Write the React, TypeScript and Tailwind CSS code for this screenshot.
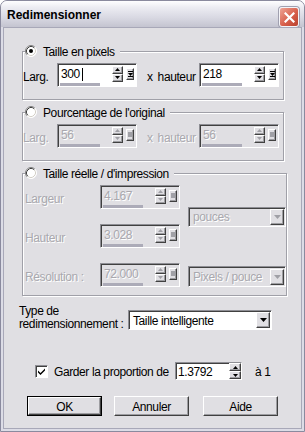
import type { ReactNode } from "react";

const UI_FONT = "font-['Liberation_Sans',Arial,sans-serif] tracking-[-0.4px]";
const FACE = "bg-[#e0dfe3]";
const RAISED =
  "border border-t-white border-l-white border-r-[#404040] border-b-[#404040] shadow-[inset_-1px_-1px_#9d9da1]";
const SUNKEN =
  "border border-t-[#8e8e94] border-l-[#8e8e94] border-r-white border-b-white shadow-[inset_1px_1px_#404040]";
const DIM = "text-[#a9a8ae] [text-shadow:1px_1px_0_#ffffff]";

function Tri({ up = false, color = "#000", w = 5, h = 3 }: { up?: boolean; color?: string; w?: number; h?: number }) {
  const pts = up ? `0,${h} ${w / 2},0 ${w},${h}` : `0,0 ${w},0 ${w / 2},${h}`;
  return (
    <svg width={w} height={h} viewBox={`0 0 ${w} ${h}`} className="block shrink-0">
      <polygon points={pts} fill={color} />
    </svg>
  );
}

function Radio({ checked = false }: { checked?: boolean }) {
  return (
    <svg width="12" height="12" viewBox="0 0 12 12" className="block shrink-0">
      <circle cx="6" cy="6" r="5.5" fill="#fff" />
      <path d="M2.11 9.89A5.5 5.5 0 0 1 9.89 2.11" fill="none" stroke="#808080" />
      <path d="M9.89 2.11A5.5 5.5 0 0 1 2.11 9.89" fill="none" stroke="#fff" />
      <path d="M2.82 9.18A4.5 4.5 0 0 1 9.18 2.82" fill="none" stroke="#404040" />
      <path d="M9.18 2.82A4.5 4.5 0 0 1 2.82 9.18" fill="none" stroke="#d4d0c8" />
      {checked ? <circle cx="6" cy="6" r="2" fill="#000" /> : null}
    </svg>
  );
}

function SpinArrows({ disabled = false, className = "" }: { disabled?: boolean; className?: string }) {
  const color = disabled ? "#a0a0a6" : "#000";
  return (
    <div className={`flex shrink-0 flex-col ${className}`}>
      <div className={`flex flex-1 items-center justify-center ${FACE} ${RAISED}`}>
        <Tri up color={color} />
      </div>
      <div className={`flex flex-1 items-center justify-center ${FACE} ${RAISED}`}>
        <Tri color={color} />
      </div>
    </div>
  );
}

function SliderButton({ disabled = false }: { disabled?: boolean }) {
  return (
    <div className={`ml-[3px] mr-[2px] flex h-[12px] w-[8px] shrink-0 items-center justify-center ${FACE} ${RAISED}`}>
      {disabled ? (
        <div className="h-[5px] w-[4px] bg-[#a0a0a6]" />
      ) : (
        <svg width="5" height="6" viewBox="0 0 5 6" className="block">
          <rect x="0" y="0" width="5" height="1" fill="#000" />
          <polygon points="0,2 5,2 2.5,5" fill="#000" />
          <rect x="0" y="5" width="5" height="1" fill="#000" />
        </svg>
      )}
    </div>
  );
}

function SpinInput({ value, disabled = false, caret = false }: { value: string; disabled?: boolean; caret?: boolean }) {
  return (
    <div className={`flex h-[24px] w-[80px] shrink-0 flex-col ${SUNKEN} ${disabled ? FACE : "bg-white"}`}>
      <div className="flex h-[19px] items-center">
        <span className={`ml-[3px] flex flex-1 items-center pt-[1px] ${disabled ? DIM : "text-black"}`}>
          {value}
          {caret ? <span className="ml-[2px] h-[13px] w-px bg-black" /> : null}
        </span>
        <SpinArrows disabled={disabled} className="h-[16px] w-[11px]" />
        <SliderButton disabled={disabled} />
      </div>
      <div className="ml-[2px] flex h-[3px]">
        <div className="w-[40px] bg-[#acabb8]" />
      </div>
    </div>
  );
}

function Dropdown({ value, disabled = false, className = "" }: { value: string; disabled?: boolean; className?: string }) {
  return (
    <div className={`flex items-center ${SUNKEN} ${disabled ? FACE : "bg-white"} ${className}`}>
      <span className={`flex-1 whitespace-nowrap pl-[4px] pt-[1px] ${disabled ? DIM : "text-black"}`}>{value}</span>
      <div className={`mr-[1px] flex h-[16px] w-[14px] items-center justify-center ${FACE} ${RAISED}`}>
        <Tri color={disabled ? "#a0a0a6" : "#000"} w={7} h={4} />
      </div>
    </div>
  );
}

function Group({ label, checked = false, children }: { label: string; checked?: boolean; children: ReactNode }) {
  return (
    <fieldset className="ml-[18px] mt-[5px] w-[262px] border border-[#a0a0a8] shadow-[inset_1px_1px_#fff,1px_1px_#fff]">
      <legend className={`ml-[2px] flex h-[14px] items-center gap-[6px] pr-[5px] ${FACE}`}>
        <Radio checked={checked} />
        <span className="whitespace-nowrap pt-[1px] text-black">{label}</span>
      </legend>
      {children}
    </fieldset>
  );
}

function PixelRow({ w, h, disabled = false, caret = false }: { w: string; h: string; disabled?: boolean; caret?: boolean }) {
  const text = disabled ? DIM : "text-black";
  return (
    <div className="mb-[12px] mt-[5px] flex items-start whitespace-nowrap">
      <span className={`mt-[8px] w-[34px] ${text}`}>Larg.</span>
      <SpinInput value={w} disabled={disabled} caret={caret} />
      <span className={`mt-[8px] flex w-[62px] pl-[10px] ${text}`}>
        x<span className="ml-[5px]">hauteur</span>
      </span>
      <SpinInput value={h} disabled={disabled} />
    </div>
  );
}

function Btn({ label, isDefault = false, className = "" }: { label: string; isDefault?: boolean; className?: string }) {
  if (isDefault) {
    return (
      <button className={`h-[20px] w-[75px] border border-black p-0 ${className}`}>
        <div className={`flex h-full w-full items-center justify-center pt-[1px] ${FACE} ${RAISED}`}>{label}</div>
      </button>
    );
  }
  return (
    <button className={`flex h-[20px] w-[75px] items-center justify-center pt-[1px] ${FACE} ${RAISED} ${className}`}>
      {label}
    </button>
  );
}

export default function App() {
  return (
    <div className="h-[432px] w-[305px] bg-white">
      <div className={`flex h-[432px] w-[305px] flex-col rounded-t-[7px] border border-[#8a8a9e] bg-[#dcdce6] ${UI_FONT}`}>
        <div className="flex h-[26px] shrink-0 justify-between rounded-t-[6px] bg-[linear-gradient(to_bottom,#fefeff_0%,#ececf2_25%,#d8d8e2_65%,#c4c4d0_100%)] pl-[6px] pr-[5px]">
          <span className="pt-[8px] text-[12px] font-bold leading-none tracking-normal text-black">Redimensionner</span>
          <div className="flex h-[20px] w-[20px] items-center justify-center self-end rounded-[3px] border border-[#f4f4f8] bg-[linear-gradient(135deg,#eea596_0%,#d8604c_55%,#b9412e_100%)] shadow-[0_0_0_1px_#a0a0b0]">
            <svg width="11" height="11" viewBox="0 0 11 11" className="block">
              <path d="M1.5 1.5L9.5 9.5M9.5 1.5L1.5 9.5" stroke="#fff" strokeWidth="2.2" strokeLinecap="square" />
            </svg>
          </div>
        </div>

        <div className={`mx-[2px] mb-[2px] flex flex-1 flex-col border border-[#a8a8b8] ${FACE} text-[12px] leading-none text-black`}>
          <div className="h-[11px]" />
          <Group label="Taille en pixels" checked>
            <PixelRow w="300" h="218" caret />
          </Group>
          <Group label="Pourcentage de l'original">
            <PixelRow w="56" h="56" disabled />
          </Group>
          <Group label="Taille réelle / d'impression">
            <div className="mb-[8px] mt-[5px] grid grid-cols-[69px_80px_98px] grid-rows-[24px_24px_24px] gap-x-[8px] gap-y-[15px] whitespace-nowrap">
              <span className={`col-start-1 row-start-1 mt-[8px] pl-[2px] ${DIM}`}>Largeur</span>
              <div className="col-start-2 row-start-1">
                <SpinInput value="4.167" disabled />
              </div>
              <span className={`col-start-1 row-start-2 mt-[8px] pl-[2px] ${DIM}`}>Hauteur</span>
              <div className="col-start-2 row-start-2">
                <SpinInput value="3.028" disabled />
              </div>
              <span className={`col-start-1 row-start-3 mt-[8px] pl-[2px] ${DIM}`}>Résolution :</span>
              <div className="col-start-2 row-start-3">
                <SpinInput value="72.000" disabled />
              </div>
              <Dropdown value="pouces" disabled className="col-start-3 row-span-2 row-start-1 h-[20px] self-center" />
              <Dropdown value="Pixels / pouce" disabled className="col-start-3 row-start-3 h-[21px] self-end" />
            </div>
          </Group>

          <div className="ml-[15px] mt-[9px] flex items-start whitespace-nowrap">
            <span className="w-[109px] leading-[13px]">
              Type de
              <br />
              redimensionnement :
            </span>
            <Dropdown value="Taille intelligente" className="mt-[5px] h-[20px] w-[144px]" />
          </div>

          <div className="ml-[31px] mt-[31px] flex h-[18px] items-center whitespace-nowrap">
            <div className={`flex h-[13px] w-[13px] shrink-0 items-center justify-center bg-white ${SUNKEN}`}>
              <svg width="7" height="7" viewBox="0 0 7 7" className="block">
                <path d="M0 2.5L2.5 5L7 0.5V2.5L2.5 7L0 4.5Z" fill="#000" />
              </svg>
            </div>
            <span className="ml-[6px] w-[121px] pt-[1px]">Garder la proportion de</span>
            <div className={`flex h-[18px] w-[67px] items-center bg-white ${SUNKEN}`}>
              <span className="flex-1 pl-[2px] pt-[1px]">1.3792</span>
              <SpinArrows className="h-[16px] w-[12px]" />
            </div>
            <span className="ml-[13px] pt-[1px]">à 1</span>
          </div>

          <div className="ml-[23px] mt-[16px] flex">
            <Btn label="OK" isDefault />
            <Btn label="Annuler" className="ml-[12px]" />
            <Btn label="Aide" className="ml-[14px]" />
          </div>
        </div>
      </div>
    </div>
  );
}
